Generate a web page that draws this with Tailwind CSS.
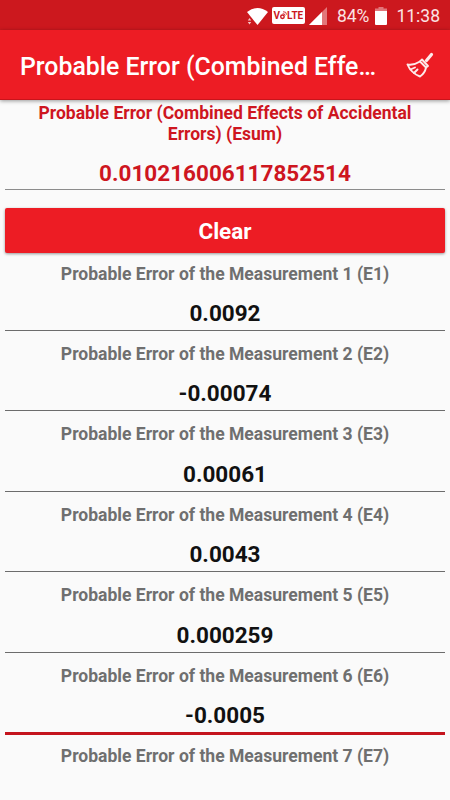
<!DOCTYPE html>
<html lang="en">
<head>
    <meta charset="UTF-8">
    <meta name="viewport" content="width=device-width, initial-scale=1.0">
    <title>Probable Error (Combined Effects of Accidental Errors)</title>
    <script src="https://cdn.jsdelivr.net/npm/@tailwindcss/browser@4"></script>
</head>
<body class="bg-[#fafafa] font-['Roboto',sans-serif] h-[800px] overflow-hidden flex flex-col">
    <!-- status bar -->
    <div class="h-[30px] shrink-0 bg-[#cc181e] flex items-center justify-end pr-[10px] pt-[1px] text-[#fbe3e3] text-[17.500px]">
        <svg class="w-[22px] h-[18px]" viewBox="0 0 22 18">
            <path d="M0 5Q10.500 -3 21 5L10.500 18Z" fill="#fff"/>
            <path d="M.8 13.500L2.500 11L4.200 13.500ZM.8 15L2.500 17.500L4.200 15Z" fill="#f6c5c5"/>
        </svg>
        <div class="ml-[3px] w-[33px] h-[17px] rounded-[2px] bg-white text-[#cc181e] text-[10px] font-bold flex items-center justify-center">
            <span>V</span>
            <svg class="w-[7px] h-[11px]" viewBox="0 0 8 11" fill="none" stroke="#cc181e">
                <circle cx="2.800" cy="7" r="2" stroke-width="1.600"/>
                <path d="M3 3.500Q5.500 3 6 5.500M3.500 1.200Q7.500 .8 7.500 4.500" stroke-width="1"/>
            </svg>
            <span>LTE</span>
        </div>
        <svg class="ml-[4px] w-[18px] h-[18px]" viewBox="0 0 18 18">
            <path d="M0 18L18 0V18Z" fill="#e2767a"/>
            <path d="M0 18L13 5V18Z" fill="#fff"/>
        </svg>
        <span class="ml-[10px] pt-[1px]">84%</span>
        <svg class="ml-[6px] w-[12px] h-[18px]" viewBox="0 0 12 18">
            <path d="M3.500 0H8.500V1.500H12V4H0V1.500H3.500Z" fill="#e2767a"/>
            <path d="M0 4H12V17Q12 18 11 18H1Q0 18 0 17Z" fill="#fff"/>
        </svg>
        <span class="ml-[9px] pt-[1px]">11:38</span>
    </div>

    <!-- app bar -->
    <header class="relative h-[70px] shrink-0 bg-[#ed1c24] border-b border-[#c8141b] shadow-[0_1px_4px_rgba(0,0,0,0.4)] flex items-center justify-between pl-[20px] pr-[16px]">
        <h1 class="text-white text-[24.850px] font-medium whitespace-nowrap pt-[4px]">Probable Error (Combined Effe…</h1>
        <svg class="mt-[1px] w-[28px] h-[26px]" viewBox="0 0 28 26" fill="none" stroke="#fdeaea" stroke-width="1.900" stroke-linecap="round" stroke-linejoin="round">
            <path d="M25.500 2.500L20.500 8.500" stroke-width="3.200"/>
            <path d="M16 7.500L22 14L20 15.500L14 9.500Z"/>
            <path d="M14 9.500Q8 13.500 1.500 12.500Q5 21 14 24.500Q19 21 20 15.500"/>
            <path d="M4.500 17.500L9 15.500M8 21L11.500 17.500"/>
        </svg>
    </header>

    <main class="flex flex-col px-[5px] text-center font-bold">
        <!-- result -->
        <div class="h-[90px] border-b border-[#8c8c8c] text-[#ce161f]">
            <p class="pt-[3px] px-6 text-[17.550px] leading-[20.500px]">Probable Error (Combined Effects of Accidental Errors) (Esum)</p>
            <p class="pt-[15px] text-[22.500px] leading-[28px]">0.010216006117852514</p>
        </div>

        <button class="mt-[18px] mb-[4px] h-[45px] shrink-0 rounded-[2px] bg-[#ed1c24] text-white text-[22.500px] font-bold shadow-[0_1px_3px_rgba(0,0,0,0.4)] pt-[3px]">Clear</button>

        <!-- measurements -->
        <div class="h-[80.450px] pt-[6.500px] text-[#6f6f6f] text-[17.550px] leading-[21px]">
            <p>Probable Error of the Measurement 1 (E1)</p>
            <p class="h-[46.500px] pt-[14.500px] text-[22.500px] leading-[28px] text-[#111] border-b border-[#6c6c6c]">0.0092</p>
        </div>
        <div class="h-[80.450px] pt-[6.500px] text-[#6f6f6f] text-[17.550px] leading-[21px]">
            <p>Probable Error of the Measurement 2 (E2)</p>
            <p class="h-[46.500px] pt-[14.500px] text-[22.500px] leading-[28px] text-[#111] border-b border-[#6c6c6c]">-0.00074</p>
        </div>
        <div class="h-[80.450px] pt-[6.500px] text-[#6f6f6f] text-[17.550px] leading-[21px]">
            <p>Probable Error of the Measurement 3 (E3)</p>
            <p class="h-[46.500px] pt-[14.500px] text-[22.500px] leading-[28px] text-[#111] border-b border-[#6c6c6c]">0.00061</p>
        </div>
        <div class="h-[80.450px] pt-[6.500px] text-[#6f6f6f] text-[17.550px] leading-[21px]">
            <p>Probable Error of the Measurement 4 (E4)</p>
            <p class="h-[46.500px] pt-[14.500px] text-[22.500px] leading-[28px] text-[#111] border-b border-[#6c6c6c]">0.0043</p>
        </div>
        <div class="h-[80.450px] pt-[6.500px] text-[#6f6f6f] text-[17.550px] leading-[21px]">
            <p>Probable Error of the Measurement 5 (E5)</p>
            <p class="h-[46.500px] pt-[14.500px] text-[22.500px] leading-[28px] text-[#111] border-b border-[#6c6c6c]">0.000259</p>
        </div>
        <div class="h-[80.450px] pt-[6.500px] text-[#6f6f6f] text-[17.550px] leading-[21px]">
            <p>Probable Error of the Measurement 6 (E6)</p>
            <p class="h-[48.500px] pt-[14.500px] text-[22.500px] leading-[28px] text-[#111] border-b-3 border-[#c4141d]">-0.0005</p>
        </div>
        <div class="pt-[6.500px] text-[#6f6f6f] text-[17.550px] leading-[21px]">
            <p>Probable Error of the Measurement 7 (E7)</p>
        </div>
    </main>
</body>
</html>
